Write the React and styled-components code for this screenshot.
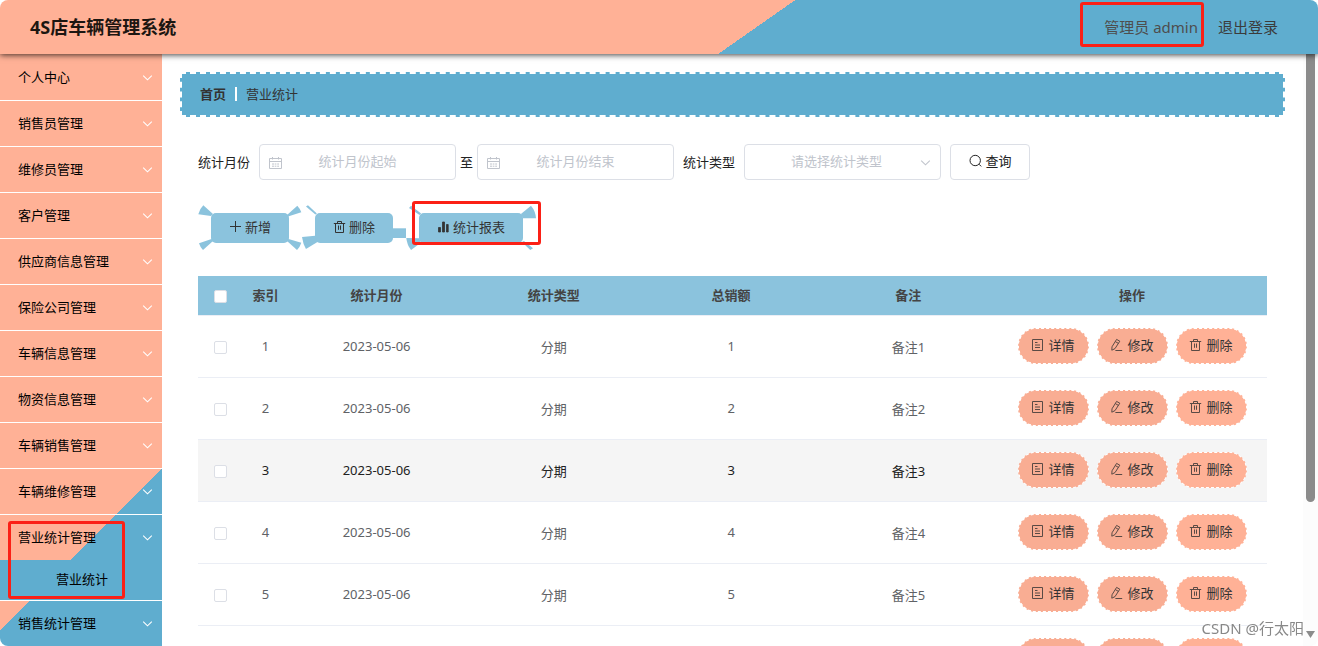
import React, { useState } from "react";
import styled, { createGlobalStyle } from "styled-components";

const GlobalStyle = createGlobalStyle`
  * {
    box-sizing: border-box;
  }

  body {
    margin: 0;
    overflow: hidden;
    background: #fff;
  }

  body, input, select, button {
    font-family: "Noto Sans", "Noto Sans CJK SC", sans-serif;
    font-size: 13px;
  }
`;

const Page = styled.div`
  display: flex;
  flex-direction: column;
  height: 100vh;
  overflow: hidden;
  border-radius: 8px;
`;

const Header = styled.header`
  display: flex;
  flex: none;
  align-items: center;
  justify-content: space-between;
  position: relative;
  z-index: 2;
  height: 54px;
  padding: 0 40px 0 30px;
  background: linear-gradient(145deg, #ffb196 57%, #5fadcf 57%);
  box-shadow: 0 1px 6px rgba(0, 0, 0, 0.75);
`;

const Title = styled.h1`
  margin: 0;
  font-size: 18px;
  line-height: 26px;
  font-weight: 700;
  color: #1c1611;
`;

const UserArea = styled.div`
  display: flex;
  gap: 20px;
  font-size: 15px;
  line-height: 20px;
`;

const UserName = styled.span`
  position: relative;
  color: #4e4e4e;
`;

const LogoutLink = styled.a`
  color: #3b3b3b;
  text-decoration: none;
`;

const Marker = styled.span`
  position: absolute;
  z-index: 3;
  inset: ${(props) => props.$inset};
  border: 3px solid #fb2016;
  border-radius: 3px;
  pointer-events: none;
`;

const Body = styled.div`
  display: flex;
  flex: 1;
  min-height: 0;
`;

const Sidebar = styled.nav`
  flex: none;
  width: 162px;
  padding-top: 1px;
  overflow: hidden;
  background: linear-gradient(135deg, #ffb196 408px, #5fadcf 408px);
`;

const MenuGroup = styled.div`
  position: relative;
  border-bottom: 1px solid #fff;
`;

const MenuItem = styled.button`
  display: flex;
  align-items: center;
  justify-content: space-between;
  width: 100%;
  height: 45px;
  padding: 0 9px 2px 18px;
  border: 0;
  background: none;
  color: #000;
  cursor: pointer;

  svg {
    margin-top: 2px;
    color: #fff;
  }
`;

const SubItem = styled.a`
  display: block;
  height: 40px;
  padding-left: 56px;
  line-height: 38px;
  background: #5fadcf;
  color: #000;
  text-decoration: none;
`;

const Main = styled.main`
  flex: 1;
  min-width: 0;
  padding: 18px;
  overflow: hidden;
`;

const Breadcrumb = styled.div`
  display: flex;
  align-items: center;
  gap: 9px;
  height: 45px;
  padding: 0 18px 2px;
  border: 2px dashed #fff;
  background: #5fadcf;
  color: #333;

  strong {
    font-weight: 700;
  }
`;

const Divider = styled.span`
  width: 2px;
  height: 14px;
  background: #fff;
`;

const Content = styled.div`
  padding: 27px 18px;
`;

const SearchForm = styled.form`
  display: flex;
  align-items: center;
  gap: 9px;
  color: #222;

  label {
    padding-bottom: 2px;
  }
`;

const DateRange = styled.div`
  display: flex;
  align-items: center;
  gap: 4px;
`;

const Field = styled.div`
  position: relative;
  width: 197px;
`;

const FieldIcon = styled.span`
  position: absolute;
  top: 0;
  ${(props) => (props.$right ? "right: 10px;" : "left: 10px;")}
  display: flex;
  align-items: center;
  height: 100%;
  color: #c0c4cc;
  pointer-events: none;
`;

const TextInput = styled.input`
  display: block;
  width: 100%;
  height: 36px;
  padding: 0 30px 2px;
  border: 1px solid #dcdfe6;
  border-radius: 4px;
  outline: none;
  color: #606266;
  text-align: center;

  &::placeholder {
    color: #c0c4cc;
  }
`;

const Select = styled.select`
  display: block;
  width: 100%;
  height: 36px;
  padding: 0 24px 2px 12px;
  border: 1px solid #dcdfe6;
  border-radius: 4px;
  outline: none;
  appearance: none;
  background: #fff;
  color: #c0c4cc;
  text-align: center;
  text-align-last: center;
`;

const SearchButton = styled.button`
  display: flex;
  align-items: center;
  justify-content: center;
  gap: 4px;
  width: 80px;
  height: 36px;
  padding: 0 0 3px;
  border: 1px solid #dcdfe6;
  border-radius: 4px;
  background: #fff;
  color: #222;
  cursor: pointer;
`;

const Toolbar = styled.div`
  display: flex;
  gap: 26px;
  margin: 33px 0;
  padding-left: 13px;
`;

const ToolButton = styled.button`
  display: flex;
  align-items: center;
  gap: 3px;
  position: relative;
  height: 30px;
  padding: 0 18px 3px;
  border: 0;
  border-radius: 5px;
  background: #8bc3dd;
  color: #333;
  cursor: pointer;
`;

const Blades = styled.svg`
  position: absolute;
  top: -8px;
  left: -13px;
  width: calc(100% + 26px);
  height: 46px;
  overflow: visible;
  fill: #8bc3dd;
  pointer-events: none;
`;

const Table = styled.table`
  width: 100%;
  table-layout: fixed;
  border-collapse: separate;
  border-spacing: 0;
  text-align: center;
  color: #606266;
`;

const Th = styled.th`
  width: ${(props) => props.$width || "auto"};
  height: 40px;
  padding: 0 0 2px;
  border-bottom: 1px solid #ebeef5;
  background: #8bc3dd;
  color: #444;
  font-weight: 700;
`;

const Row = styled.tr`
  background: ${(props) => (props.$active ? "#f5f5f5" : "#fff")};
  color: ${(props) => (props.$active ? "#222" : "#606266")};
`;

const Td = styled.td`
  height: 62px;
  padding: 0 0 1px;
  border-bottom: 1px solid #ebeef5;
`;

const Checkbox = styled.input`
  display: block;
  width: 13px;
  height: 13px;
  margin: 3px auto 0;
  border: 1px solid #dcdfe6;
  border-radius: 2px;
  appearance: none;
  background: #fff;

  &:checked {
    background: #5fadcf;
  }
`;

const Actions = styled.div`
  display: flex;
  justify-content: center;
  gap: 8px;
`;

const ActionButton = styled.button`
  display: flex;
  align-items: center;
  justify-content: center;
  gap: 4px;
  width: 71px;
  height: 36px;
  padding: 0 0 3px;
  border: 1px dashed #fff;
  border-radius: 20px;
  background: ${(props) => (props.$light ? "#ffb196" : "#f9ad93")};
  color: #333;
  cursor: pointer;

  svg {
    color: #5a4a45;
  }
`;

const ScrollTrack = styled.div`
  display: flex;
  flex: none;
  flex-direction: column;
  align-items: center;
  justify-content: space-between;
  width: 15px;
  padding-bottom: 8px;
  background: #fcfcfc;
`;

const ScrollThumb = styled.div`
  width: 9px;
  height: calc(100% - 136px);
  border-radius: 0 0 5px 5px;
  background: #8b8b8b;
`;

const Watermark = styled.div`
  position: fixed;
  right: 14px;
  bottom: 7px;
  z-index: 4;
  font-size: 15px;
  line-height: 22px;
  color: #888;
  text-shadow: 1px 1px 0 #fff;
`;

const Icon = ({ size = 13, children }) => (
  <svg
    width={size}
    height={size}
    viewBox="0 0 13 13"
    fill="none"
    stroke="currentColor"
    strokeWidth="1"
    aria-hidden="true"
  >
    {children}
  </svg>
);

const ArrowIcon = () => (
  <Icon size={11}>
    <path d="M1.4 4.4 L6.5 9.2 L11.6 4.4" strokeWidth="1.3" />
  </Icon>
);

const CalendarIcon = () => (
  <Icon>
    <path d="M0.5 2.5 H12.5 V12.5 H0.5 Z M0.5 5.5 H12.5 M3.5 1 V3.5 M9.5 1 V3.5" />
    <path d="M3 8 H5 M5.7 8 H7.4 M8.2 8 H10 M3 10.2 H5 M5.7 10.2 H7.4 M8.2 10.2 H10" />
  </Icon>
);

const SearchIcon = () => (
  <Icon>
    <circle cx="6.2" cy="6.5" r="5.2" />
    <path d="M10 10.2 L12.2 12.4" />
  </Icon>
);

const PlusIcon = () => (
  <Icon>
    <path d="M6.5 1 V12 M1 6.5 H12" />
  </Icon>
);

const TrashIcon = () => (
  <Icon>
    <path d="M0.8 3.5 H12.2 M4.5 3.5 V1.5 H8.5 V3.5 M2.5 3.5 V12.5 H10.5 V3.5 M5.5 5.5 V9.8 M7.5 5.5 V9.8" />
  </Icon>
);

const ChartIcon = () => (
  <Icon>
    <path
      d="M1.5 7.5 H3.5 V12 H1.5 Z M5.5 2 H7.5 V12 H5.5 Z M9.5 4.5 H11.2 V12 H9.5 Z"
      fill="currentColor"
      strokeWidth="0.8"
    />
  </Icon>
);

const DetailIcon = () => (
  <Icon>
    <path d="M1.5 1.5 H11.5 V12.5 H1.5 Z M4 4.5 H6.5 M4 7 H9 M4 9.5 H9" />
  </Icon>
);

const EditIcon = () => (
  <Icon>
    <path d="M6.6 1.4 L9.8 3.2 L5 10.6 L1.8 12.2 L2 8.8 Z M5.4 3.6 L8.4 5.4 M5.4 12.5 H12.2" />
  </Icon>
);

const menus = [
  { name: "个人中心" },
  { name: "销售员管理" },
  { name: "维修员管理" },
  { name: "客户管理" },
  { name: "供应商信息管理" },
  { name: "保险公司管理" },
  { name: "车辆信息管理" },
  { name: "物资信息管理" },
  { name: "车辆销售管理" },
  { name: "车辆维修管理" },
  { name: "营业统计管理", child: "营业统计" },
  { name: "销售统计管理" },
];

const rows = [1, 2, 3, 4, 5, 6].map((id) => ({
  id,
  month: "2023-05-06",
  type: "分期",
  total: id,
  remark: `备注${id}`,
}));

const App = () => {
  const [checked, setChecked] = useState([]);

  const toggle = (id) => {
    setChecked(
      checked.includes(id) ? checked.filter((c) => c !== id) : [...checked, id]
    );
  };

  const toggleAll = () => {
    setChecked(checked.length === rows.length ? [] : rows.map((r) => r.id));
  };

  return (
    <Page>
      <GlobalStyle />
      <Header>
        <Title>4S店车辆管理系统</Title>
        <UserArea>
          <UserName>
            管理员 admin
            <Marker $inset="-15px -6px -10px -24px" />
          </UserName>
          <LogoutLink href="#logout">退出登录</LogoutLink>
        </UserArea>
      </Header>

      <Body>
        <Sidebar>
          {menus.map((menu) => (
            <MenuGroup key={menu.name}>
              <MenuItem type="button">
                {menu.name}
                <ArrowIcon />
              </MenuItem>
              {menu.child && (
                <>
                  <SubItem href="#stat">{menu.child}</SubItem>
                  <Marker $inset="6px 37px 1px 8px" />
                </>
              )}
            </MenuGroup>
          ))}
        </Sidebar>

        <Main>
          <Breadcrumb>
            <strong>首页</strong>
            <Divider />
            <span>营业统计</span>
          </Breadcrumb>

          <Content>
            <SearchForm onSubmit={(e) => e.preventDefault()}>
              <label htmlFor="start">统计月份</label>
              <DateRange>
                <Field>
                  <FieldIcon>
                    <CalendarIcon />
                  </FieldIcon>
                  <TextInput id="start" placeholder="统计月份起始" />
                </Field>
                <label htmlFor="end">至</label>
                <Field>
                  <FieldIcon>
                    <CalendarIcon />
                  </FieldIcon>
                  <TextInput id="end" placeholder="统计月份结束" />
                </Field>
              </DateRange>
              <label htmlFor="type">统计类型</label>
              <Field>
                <Select id="type" defaultValue="">
                  <option value="">请选择统计类型</option>
                  <option value="分期">分期</option>
                </Select>
                <FieldIcon $right>
                  <ArrowIcon />
                </FieldIcon>
              </Field>
              <SearchButton type="submit">
                <SearchIcon />
                查询
              </SearchButton>
            </SearchForm>

            <Toolbar>
              <ToolButton type="button">
                <Blades viewBox="0 0 104 46" preserveAspectRatio="none">
                  <path d="M0.3 9.3 Q1.5 4 5.3 0.3 L15 9 L13 11 Z" />
                  <path d="M89 10 L99.3 0.7 Q102 3.5 103.3 7.3 L90 11.5 Z" />
                  <path d="M13.5 34 L1 38.3 Q2 42 5 45 L15 36 Z" />
                  <path d="M90.5 34 L103.3 37.7 Q102 42 99 45 L89 36 Z" />
                </Blades>
                <PlusIcon />
                新增
              </ToolButton>
              <ToolButton type="button">
                <Blades viewBox="0 0 105 46" preserveAspectRatio="none">
                  <path d="M4 1.5 L6 0.2 L15 8.5 L13.5 9.6 Z" />
                  <path d="M0 32 L13.3 30.7 L16 36.7 L4 44 Q1 39 0 32 Z" />
                  <path d="M91 23.3 H105 V33 H91 Z" />
                </Blades>
                <TrashIcon />
                删除
              </ToolButton>
              <ToolButton type="button">
                <Blades viewBox="0 0 129 46" preserveAspectRatio="none">
                  <path d="M3 3 L5 0.7 L15 8.5 L13.5 10 Z" />
                  <path d="M0.3 33 L13 33.3 L15 37.5 L5 45 Q1 40 0.3 33 Z" />
                  <path d="M114 9 L124 0.7 Q128.5 6 129 13.3 L116 13.3 Z" />
                  <path d="M115 37 L117 36 L126 43.3 L123.3 45 Z" />
                </Blades>
                <ChartIcon />
                统计报表
                <Marker $inset="-12px -18px -2px -7px" />
              </ToolButton>
            </Toolbar>

            <Table>
              <thead>
                <tr>
                  <Th $width="45px">
                    <Checkbox
                      type="checkbox"
                      aria-label="全选"
                      checked={checked.length === rows.length}
                      onChange={toggleAll}
                    />
                  </Th>
                  <Th $width="45px">索引</Th>
                  <Th>统计月份</Th>
                  <Th>统计类型</Th>
                  <Th>总销额</Th>
                  <Th>备注</Th>
                  <Th $width="270px">操作</Th>
                </tr>
              </thead>
              <tbody>
                {rows.map((row) => (
                  <Row key={row.id} $active={row.id === 3}>
                    <Td>
                      <Checkbox
                        type="checkbox"
                        aria-label={`选择${row.id}`}
                        checked={checked.includes(row.id)}
                        onChange={() => toggle(row.id)}
                      />
                    </Td>
                    <Td>{row.id}</Td>
                    <Td>{row.month}</Td>
                    <Td>{row.type}</Td>
                    <Td>{row.total}</Td>
                    <Td>{row.remark}</Td>
                    <Td>
                      <Actions>
                        <ActionButton type="button">
                          <DetailIcon />
                          详情
                        </ActionButton>
                        <ActionButton type="button">
                          <EditIcon />
                          修改
                        </ActionButton>
                        <ActionButton type="button" $light>
                          <TrashIcon />
                          删除
                        </ActionButton>
                      </Actions>
                    </Td>
                  </Row>
                ))}
              </tbody>
            </Table>
          </Content>
        </Main>

        <ScrollTrack>
          <ScrollThumb />
          <svg width="9" height="7" viewBox="0 0 9 7" aria-hidden="true">
            <path d="M0 0 H9 L4.5 7 Z" fill="#8b8b8b" />
          </svg>
        </ScrollTrack>
      </Body>
      <Watermark>CSDN @行太阳</Watermark>
    </Page>
  );
};

export default App;
